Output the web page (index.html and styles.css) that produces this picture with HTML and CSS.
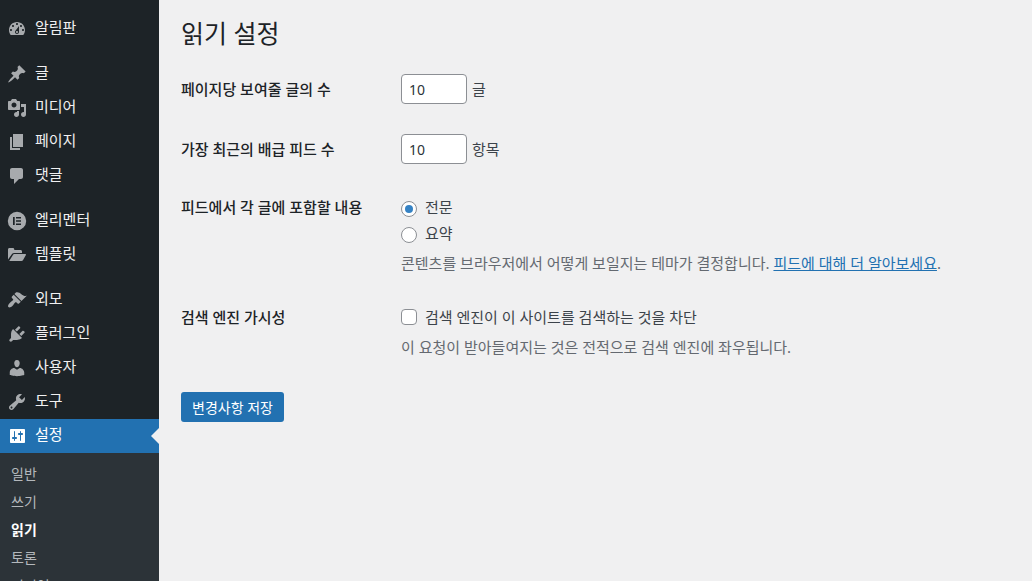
FILE: index.html
```html
<!DOCTYPE html>
<html lang="ko">
<head>
  <meta charset="UTF-8">
  <meta name="viewport" content="width=device-width, initial-scale=1.0">
  <title>읽기 설정</title>
  <link rel="stylesheet" href="styles.css">
</head>
<body>
  <nav class="sidebar">
    <ul class="menu">
      <li><a href="#"><svg viewBox="0 0 20 20"><path fill-rule="evenodd" d="M3.76 16h12.48c1.1-1.37 1.76-3.11 1.76-5 0-4.42-3.58-8-8-8s-8 3.58-8 8c0 1.89.66 3.63 1.76 5zM10 4c.55 0 1 .45 1 1s-.45 1-1 1-1-.45-1-1 .45-1 1-1zM6 6c.55 0 1 .45 1 1s-.45 1-1 1-1-.45-1-1 .45-1 1-1zm8 0c.55 0 1 .45 1 1s-.45 1-1 1-1-.45-1-1 .45-1 1-1zm-5.37 5.55L12 7v6c0 1.1-.9 2-2 2s-2-.9-2-2c0-.57.24-1.08.63-1.45zM4 10c.55 0 1 .45 1 1s-.45 1-1 1-1-.45-1-1 .45-1 1-1zm12 0c.55 0 1 .45 1 1s-.45 1-1 1-1-.45-1-1 .45-1 1-1zm-5 3c0-.55-.45-1-1-1s-1 .45-1 1 .45 1 1 1 1-.45 1-1z"/></svg>알림판</a></li>
      <li class="separator"></li>
      <li><a href="#"><svg viewBox="0 0 20 20"><path d="M10.44 3.02l1.82-1.82 6.36 6.35-1.83 1.82c-1.05-.68-2.48-.57-3.41.36l-.75.75c-.92.93-1.04 2.35-.35 3.41l-1.83 1.82-2.41-2.41-2.8 2.79c-.42.42-3.38 2.71-3.8 2.29s1.86-3.39 2.28-3.81l2.79-2.79L4.1 9.36l1.83-1.82c1.05.69 2.48.57 3.4-.36l.75-.75c.93-.92 1.05-2.35.36-3.41z"/></svg>글</a></li>
      <li><a href="#"><svg viewBox="0 0 20 20"><path fill-rule="evenodd" d="M13 11V4c0-.55-.45-1-1-1h-1.67L9 1H5L3.67 3H2c-.55 0-1 .45-1 1v7c0 .55.45 1 1 1h10c.55 0 1-.45 1-1zM7 4.5c1.38 0 2.5 1.12 2.5 2.5S8.38 9.5 7 9.5 4.5 8.38 4.5 7 5.62 4.5 7 4.5zM14 6h5v10.5c0 1.38-1.12 2.5-2.5 2.5S14 17.88 14 16.5s1.12-2.5 2.5-2.5c.17 0 .34.02.5.05V9h-3V6zm-4 8.05V13h2v3.5c0 1.38-1.12 2.5-2.5 2.5S7 17.88 7 16.5 8.12 14 9.5 14c.17 0 .34.02.5.05z"/></svg>미디어</a></li>
      <li><a href="#"><svg viewBox="0 0 20 20"><path d="M6 15V2h10v13H6zm-1 1h8v2H3V5h2v11z"/></svg>페이지</a></li>
      <li><a href="#"><svg viewBox="0 0 20 20"><path d="M5 2h9c1.1 0 2 .9 2 2v7c0 1.1-.9 2-2 2h-2l-5 5v-5H5c-1.1 0-2-.9-2-2V4c0-1.1.9-2 2-2z"/></svg>댓글</a></li>
      <li class="separator"></li>
      <li><a href="#"><svg viewBox="0 0 20 20"><path fill-rule="evenodd" d="M10 .8a9.2 9.2 0 1 0 0 18.4 9.2 9.2 0 0 0 0-18.4zM6 6h1.7v8H6zM9 6h5v1.6H9zM9 9.2h5v1.6H9zM9 12.4h5V14H9z"/></svg>엘리멘터</a></li>
      <li><a href="#"><svg viewBox="0 0 20 20"><path d="M1 14.5v-10C1 3.6 1.6 3 2.500 3h3.300c.9 0 1.500.6 1.500 1.500V5h6.200c.9 0 1.500.6 1.500 1.500V8H7.200c-.9 0-1.700.4-2.200 1.100zM2.200 16l3.700-6.100c.3-.5.8-.8 1.400-.8h11c.6 0 .9.5.6 1l-2.800 4.900c-.4.6-.9 1-1.600 1z"/></svg>템플릿</a></li>
      <li class="separator"></li>
      <li><a href="#"><svg viewBox="0 0 20 20"><path d="M14.48 11.06L7.41 3.99l1.5-1.5c.5-.56 2.3-.47 3.51.32 1.21.8 1.43 1.28 2.91 2.1 1.18.64 2.45 1.26 4.45.85zm-.71.71L6.7 4.7 4.93 6.47c-.39.39-.39 1.02 0 1.41l1.06 1.06c.39.39.39 1.03 0 1.42-.6.6-1.43 1.11-2.21 1.69-.35.26-.7.53-1.01.84C1.43 14.23.4 16.08 1.4 17.07c.99 1 2.84-.03 4.18-1.36.31-.31.58-.66.85-1.02.57-.78 1.08-1.61 1.69-2.21.39-.39 1.02-.39 1.41 0l1.06 1.06c.39.39 1.02.39 1.41 0z"/></svg>외모</a></li>
      <li><a href="#"><svg viewBox="0 0 20 20"><path d="M13.11 4.36L9.87 7.6 8 5.73l3.24-3.24c.35-.34 1.05-.2 1.56.32.52.51.66 1.21.31 1.55zm-8 1.77l.91-1.12 9.01 9.01-1.19.84c-.71.71-2.63 1.16-3.82 1.16H6.14L4.9 17.26c-.59.59-1.54.59-2.12 0-.59-.58-.59-1.53 0-2.12l1.24-1.24v-3.88c0-1.13.4-3.19 1.09-3.89zm7.26 3.97l3.24-3.24c.34-.35 1.04-.21 1.55.31.52.51.66 1.21.31 1.55l-3.24 3.25z"/></svg>플러그인</a></li>
      <li><a href="#"><svg viewBox="0 0 20 20"><path d="M10 9.25c-2.27 0-2.73-3.44-2.73-3.44C7 4.02 7.82 2 9.97 2c2.16 0 2.98 2.02 2.71 3.81 0 0-.41 3.44-2.68 3.44zm0 2.57L12.72 10c2.39 0 4.52 2.33 4.52 4.53v2.49s-3.65 1.13-7.24 1.13c-3.65 0-7.24-1.13-7.24-1.13v-2.49c0-2.25 1.94-4.48 4.47-4.48z"/></svg>사용자</a></li>
      <li><a href="#"><svg viewBox="0 0 20 20"><path fill-rule="evenodd" d="M16.68 9.77c-1.34 1.34-3.3 1.67-4.95.99l-5.41 6.52c-.99.99-2.59.99-3.58 0s-.99-2.59 0-3.57l6.52-5.42c-.68-1.65-.35-3.61.99-4.95 1.28-1.28 3.12-1.62 4.72-1.06l-2.89 2.89 2.82 2.82 2.86-2.87c.53 1.58.18 3.39-1.08 4.65zM3.81 16.21c.4.39 1.04.39 1.43 0 .4-.4.4-1.04 0-1.43-.39-.4-1.03-.4-1.43 0-.39.39-.39 1.03 0 1.43z"/></svg>도구</a></li>
      <li class="current"><a href="#"><svg viewBox="0 0 20 20"><path fill-rule="evenodd" d="M18 16V4c0-.55-.45-1-1-1H4c-.55 0-1 .45-1 1v12c0 .55.45 1 1 1h13c.55 0 1-.45 1-1zM8 11h1c.55 0 1 .45 1 1s-.45 1-1 1H8v1.5c0 .28-.22.5-.5.5s-.5-.22-.5-.5V13H6c-.55 0-1-.45-1-1s.45-1 1-1h1V5.5c0-.28.22-.5.5-.5s.5.22.5.5V11zm5-2h-1c-.55 0-1-.45-1-1s.45-1 1-1h1V5.5c0-.28.22-.5.5-.5s.5.22.5.5V7h1c.55 0 1 .45 1 1s-.45 1-1 1h-1v5.5c0 .28-.22.5-.5.5s-.5-.22-.5-.5V9z"/></svg>설정</a></li>
    </ul>
    <ul class="submenu">
      <li><a href="#">일반</a></li>
      <li><a href="#">쓰기</a></li>
      <li><a href="#" class="active">읽기</a></li>
      <li><a href="#">토론</a></li>
      <li><a href="#">미디어</a></li>
    </ul>
  </nav>

  <main class="content">
    <h1>읽기 설정</h1>
    <form>
      <div class="row row-input">
        <label class="title" for="posts_per_page">페이지당 보여줄 글의 수</label>
        <div class="number">
          <input type="number" id="posts_per_page" value="10">
          <span>글</span>
        </div>
      </div>
      <div class="row row-input">
        <label class="title" for="posts_per_rss">가장 최근의 배급 피드 수</label>
        <div class="number">
          <input type="number" id="posts_per_rss" value="10">
          <span>항목</span>
        </div>
      </div>
      <div class="row">
        <div class="title" id="feed_title">피드에서 각 글에 포함할 내용</div>
        <div role="radiogroup" aria-labelledby="feed_title">
          <label class="option"><input type="radio" name="rss_use_excerpt" checked>전문</label>
          <label class="option"><input type="radio" name="rss_use_excerpt">요약</label>
          <p class="description">콘텐츠를 브라우저에서 어떻게 보일지는 테마가 결정합니다. <a href="#">피드에 대해 더 알아보세요</a>.</p>
        </div>
      </div>
      <div class="row">
        <div class="title">검색 엔진 가시성</div>
        <div>
          <label class="option"><input type="checkbox" name="blog_public">검색 엔진이 이 사이트를 검색하는 것을 차단</label>
          <p class="description">이 요청이 받아들여지는 것은 전적으로 검색 엔진에 좌우됩니다.</p>
        </div>
      </div>
      <button type="button" class="save">변경사항 저장</button>
    </form>
  </main>
</body>
</html>
```

FILE: styles.css
```css
* {
  box-sizing: border-box;
}
body {
  margin: 0;
  display: flex;
  height: 100vh;
  background: #f0f0f1;
  color: #3c434a;
  font-family: "Noto Sans", "Noto Sans CJK KR", sans-serif;
  font-size: 15px;
}
ul {
  list-style: none;
  margin: 0;
  padding: 0;
}

/* sidebar */
.sidebar {
  width: 159px;
  flex-shrink: 0;
  overflow: hidden;
  background: #1d2327;
}
.menu {
  padding-top: 12px;
}
.menu a {
  display: flex;
  align-items: flex-start;
  gap: 8px;
  height: 34px;
  padding: 7px 0 0 7px;
  line-height: 16px;
  color: #f0f0f1;
  text-decoration: none;
}
.menu svg {
  width: 20px;
  height: 20px;
  fill: #a7aaad;
}
.separator {
  height: 11px;
}
.current {
  position: relative;
  background: #2271b1;
}
.current::after {
  content: "";
  position: absolute;
  right: 0;
  top: 9px;
  border: 8px solid transparent;
  border-left: 0;
  border-right-color: #f0f0f1;
}
.menu .current a {
  color: #fff;
}
.menu .current svg {
  fill: #fff;
}
.submenu {
  padding: 7px 0;
  background: #2c3338;
}
.submenu a {
  display: block;
  padding-left: 11px;
  line-height: 28px;
  font-size: 14px;
  color: #b4b8bc;
  text-decoration: none;
}
.submenu .active {
  color: #fff;
  font-weight: 600;
}

/* settings form */
.content {
  flex: 1;
  padding: 16px 22px;
}
h1 {
  margin: 0 0 24px;
  font-size: 25px;
  font-weight: 400;
  line-height: 34px;
  color: #1d2327;
}
.row {
  display: grid;
  grid-template-columns: 220px 1fr;
  margin-bottom: 30px;
}
.row-input {
  align-items: center;
}
.title {
  line-height: 26px;
  font-weight: 500;
  color: #1d2327;
}
.number {
  display: flex;
  align-items: center;
  gap: 5px;
  line-height: 26px;
}
input {
  margin: 0;
  border: 1px solid #8c8f94;
  background: #fff;
}
input[type="number"] {
  width: 66px;
  height: 30px;
  padding: 0 7px;
  border-radius: 4px;
  font: inherit;
  font-size: 14px;
  color: #2c3338;
}
input[type="radio"],
input[type="checkbox"] {
  appearance: none;
  width: 16px;
  height: 16px;
  border-radius: 4px;
}
input[type="radio"] {
  display: grid;
  place-items: center;
  margin-top: 4px;
  border-radius: 50%;
}
input[type="radio"]:checked::before {
  content: "";
  width: 8px;
  height: 8px;
  border-radius: 50%;
  background: #3582c4;
}
.option {
  display: flex;
  align-items: center;
  gap: 8px;
  line-height: 26px;
}
.description {
  margin: 6px 0 0;
  line-height: 22px;
  color: #646970;
}
.description a {
  color: #2271b1;
}
.save {
  display: block;
  margin-top: 34px;
  height: 30px;
  padding: 0 11px;
  border: 0;
  border-radius: 3px;
  background: #2271b1;
  color: #fff;
  font: inherit;
  font-size: 14px;
}
```
